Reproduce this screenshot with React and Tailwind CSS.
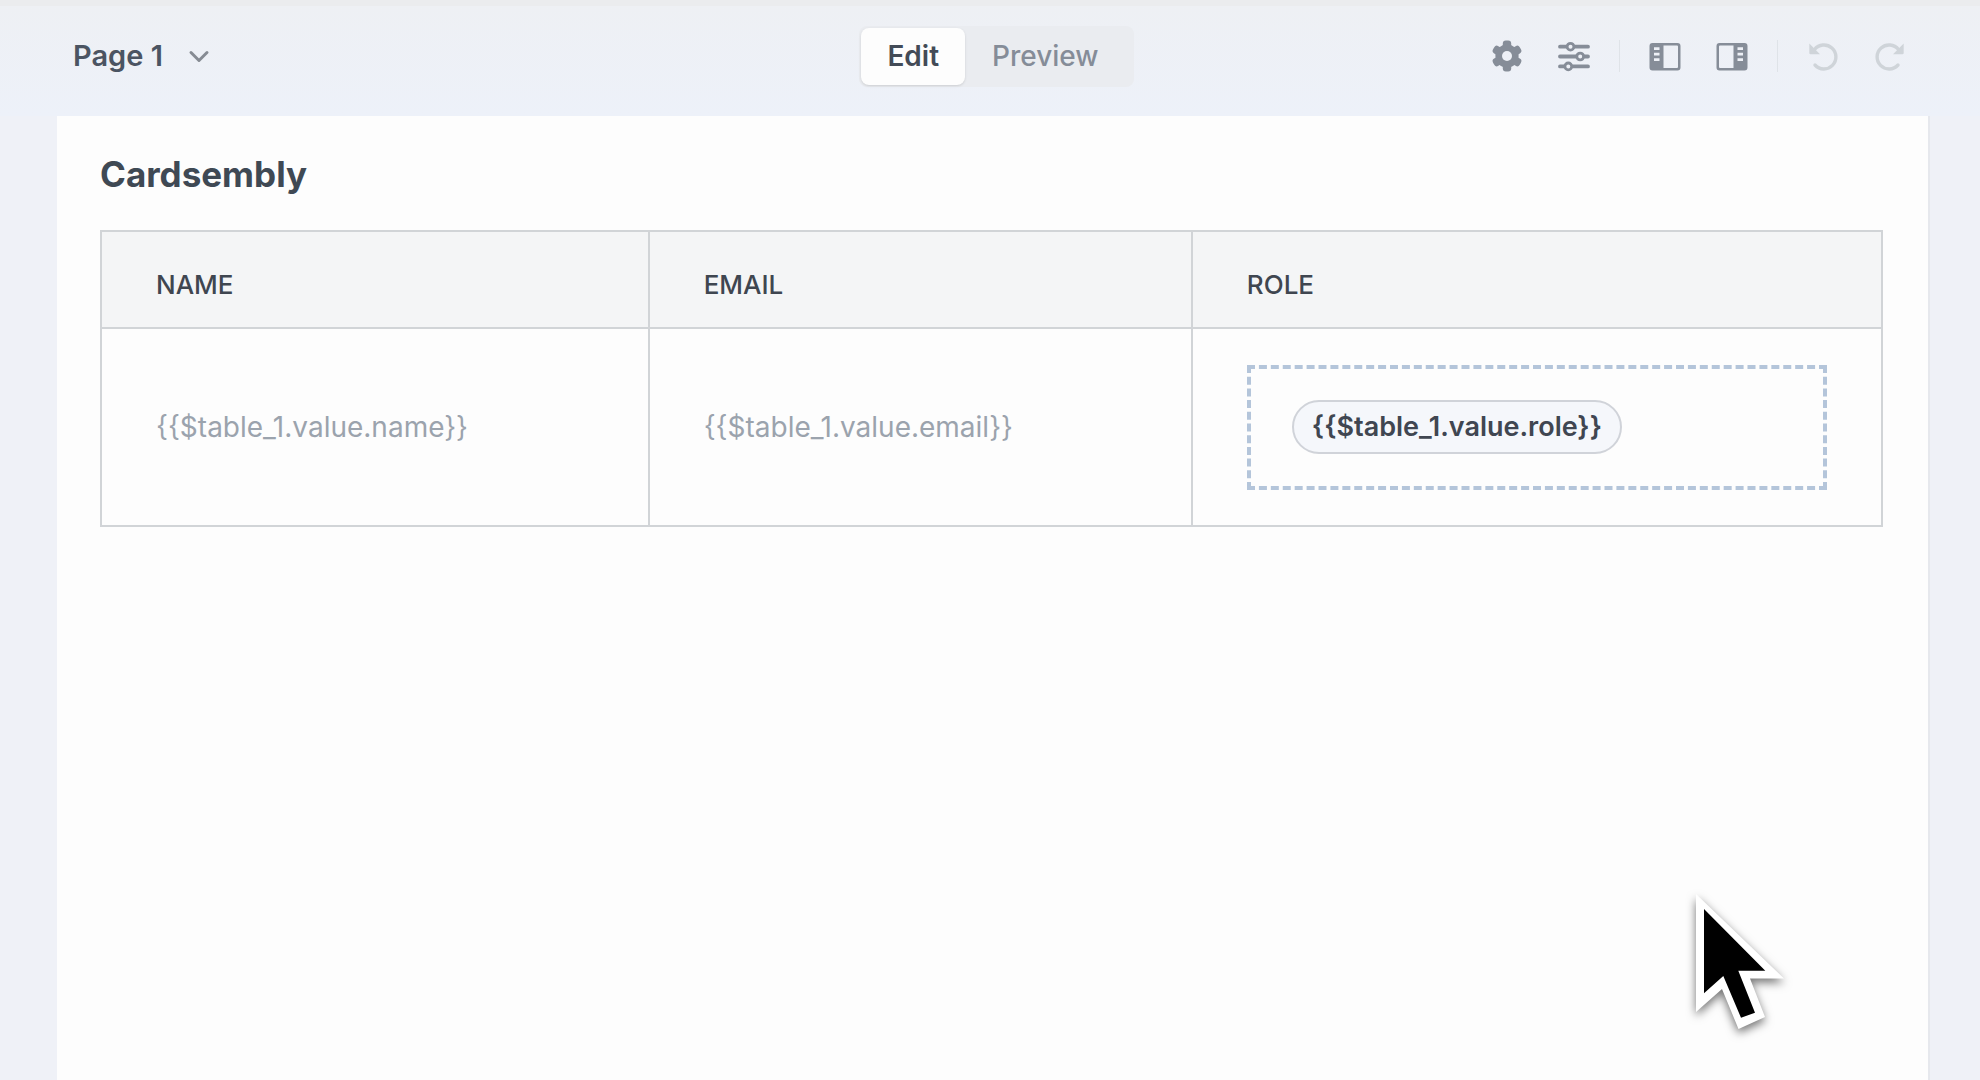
import React, { useState } from "react";

const GearIcon = () => (
  <svg viewBox="0 0 32 32" className="w-8 h-8" fill="currentColor">
    <mask id="gear-hole">
      <rect width="32" height="32" fill="white" />
      <circle cx="16" cy="16" r="5" fill="black" />
    </mask>
    <g mask="url(#gear-hole)">
      <circle cx="16" cy="16" r="11.6" />
      <rect x="11.8" y="0.6" width="8.4" height="30.8" rx="3" />
      <rect
        x="11.8"
        y="0.6"
        width="8.4"
        height="30.8"
        rx="3"
        transform="rotate(60 16 16)"
      />
      <rect
        x="11.8"
        y="0.6"
        width="8.4"
        height="30.8"
        rx="3"
        transform="rotate(120 16 16)"
      />
    </g>
  </svg>
);

const SlidersIcon = () => (
  <svg
    viewBox="0 0 32 32"
    className="w-8 h-8"
    fill="none"
    stroke="currentColor"
    strokeLinecap="round"
  >
    <path strokeWidth="3.8" d="M2 6.7h6M17 6.7h13M2 16.5h16M26.5 16.5h3.5M2 26.4h4M15 26.4h15" />
    <circle cx="12.5" cy="6.7" r="3.4" strokeWidth="2.8" />
    <circle cx="22.2" cy="16.5" r="3.4" strokeWidth="2.8" />
    <circle cx="10.3" cy="26.4" r="3.4" strokeWidth="2.8" />
  </svg>
);

const PanelIcon = ({ flip }) => (
  <svg
    viewBox="0 0 32 32"
    className={flip ? "w-8 h-8 -scale-x-100" : "w-8 h-8"}
    fill="currentColor"
  >
    <path
      fillRule="evenodd"
      d="M3.5 3h25a3 3 0 0 1 3 3v21.500a3 3 0 0 1-3 3h-25a3 3 0 0 1-3-3V6a3 3 0 0 1 3-3zM14.500 5.500v22.500h13.500a1 1 0 0 0 1-1V6.500a1 1 0 0 0-1-1zM5 7.200v2.800h5.500V7.200zM5 12.700v2.800h5.500v-2.800zM5 18.200v2.800h5.500v-2.800z"
    />
  </svg>
);

const UndoIcon = ({ flip }) => (
  <svg
    viewBox="0 0 32 32"
    className={flip ? "w-8 h-8 -scale-x-100" : "w-8 h-8"}
    fill="none"
  >
    <path
      d="M7.500 9.500A12 12 0 1 1 8 25"
      stroke="currentColor"
      strokeWidth="3.4"
      strokeLinecap="round"
    />
    <path d="M2.300 3.500v9.500a1.200 1.200 0 0 0 1.200 1.200h9.500z" fill="currentColor" />
  </svg>
);

const Divider = () => <div className="w-px h-8 bg-[#dfe3e8]" />;

const Cursor = () => (
  <svg
    viewBox="0 0 130 160"
    className="absolute right-[174px] top-[874px] w-[130px] h-40 pointer-events-none drop-shadow-[0_4px_5px_rgba(0,0,0,0.55)]"
  >
    <path
      d="M20 14L108 98.500H74L89 137L62.500 149L46 109L20 132z"
      fill="white"
    />
    <path
      d="M28 29L89.300 90.700H62.300L79 132.700L65 137.700L47.300 96L28 113.300z"
      fill="black"
    />
  </svg>
);

const columns = [
  { title: "Name", value: "{{$table_1.value.name}}" },
  { title: "Email", value: "{{$table_1.value.email}}" },
  { title: "Role", value: "{{$table_1.value.role}}", tag: true },
];

const App = () => {
  const [mode, setMode] = useState("edit");

  const tabClass = (active) =>
    active
      ? "h-[57px] px-[26px] rounded-lg bg-[#fdfdfd] font-semibold text-[#434b57] shadow-sm cursor-pointer"
      : "h-[57px] px-[27px] rounded-lg font-medium text-[#858c98] cursor-pointer";

  return (
    <div className="relative min-h-screen overflow-hidden flex flex-col bg-[#eff1f7] border-t-[6px] border-[#ebecee] font-[Inter,sans-serif]">
      {/* Toolbar */}
      <header className="grid grid-cols-[1fr_auto_1fr] items-center h-[110px] pb-2.5 pl-[73px] pr-[60px] bg-linear-to-b from-[#eef0f4] to-[#edf1f9]">
        <button
          type="button"
          className="justify-self-start flex items-center gap-6 text-[29px] leading-8 font-semibold text-[#4b5462] cursor-pointer"
        >
          Page 1
          <svg viewBox="0 0 24 24" className="w-6 h-6" fill="none">
            <path
              d="M4 8.500l8 8 8-8"
              stroke="#868b93"
              strokeWidth="3"
              strokeLinecap="round"
              strokeLinejoin="round"
            />
          </svg>
        </button>

        <div className="flex items-center p-0.5 pr-2 rounded-lg bg-[#eaecf0] text-[28px] leading-8">
          <button
            type="button"
            onClick={() => setMode("edit")}
            className={tabClass(mode === "edit")}
          >
            Edit
          </button>
          <button
            type="button"
            onClick={() => setMode("preview")}
            className={tabClass(mode === "preview")}
          >
            Preview
          </button>
        </div>

        <div className="justify-self-end flex items-center gap-[29px] mr-[14px] text-[#868d98]">
          <div className="flex items-center gap-[35px]">
            <button type="button" aria-label="Settings" className="cursor-pointer">
              <GearIcon />
            </button>
            <button type="button" aria-label="Options" className="cursor-pointer">
              <SlidersIcon />
            </button>
          </div>
          <Divider />
          <div className="flex items-center gap-[35px]">
            <button type="button" aria-label="Left panel" className="cursor-pointer">
              <PanelIcon />
            </button>
            <button type="button" aria-label="Right panel" className="cursor-pointer">
              <PanelIcon flip />
            </button>
          </div>
          <Divider />
          <div className="flex items-center gap-[35px] text-[#cfd4d9]">
            <button type="button" aria-label="Undo" disabled>
              <UndoIcon />
            </button>
            <button type="button" aria-label="Redo" disabled>
              <UndoIcon flip />
            </button>
          </div>
        </div>
      </header>

      {/* Canvas */}
      <main className="flex-1 ml-[57px] mr-[50px] pl-[43px] pr-[45px] pt-9 bg-[#fdfdfd] border-r-2 border-[#e6e8ed]">
        <h1 className="text-[35px] leading-[44px] font-bold text-[#3f4954]">
          Cardsembly
        </h1>

        <table className="w-full mt-[34px] table-fixed border-collapse text-left">
          <colgroup>
            <col className="w-[30.75%]" />
            <col className="w-[30.5%]" />
            <col />
          </colgroup>
          <thead>
            <tr className="h-[97px] bg-[#f4f5f6]">
              {columns.map((col) => (
                <th
                  key={col.title}
                  className="border-2 border-[#d1d4d7] px-[54px] pt-[11px] text-[26px] leading-8 font-medium uppercase text-[#3f4650]"
                >
                  {col.title}
                </th>
              ))}
            </tr>
          </thead>
          <tbody>
            <tr className="h-[198px]">
              {columns.map((col) => (
                <td
                  key={col.title}
                  className="border-2 border-[#d1d4d7] px-[54px] text-[28px] leading-8 font-normal text-[#9ba3ad]"
                >
                  {col.tag ? (
                    <div className="flex items-center h-[125px] px-[41px] border-4 border-dashed border-[#b4c5da]">
                      <span className="flex items-center h-[54px] px-[18px] rounded-full border-2 border-[#d0d3d9] bg-[#f5f7fb] text-[27px] font-semibold text-[#404651]">
                        {col.value}
                      </span>
                    </div>
                  ) : (
                    col.value
                  )}
                </td>
              ))}
            </tr>
          </tbody>
        </table>
      </main>

      <Cursor />
    </div>
  );
};

export default App;
